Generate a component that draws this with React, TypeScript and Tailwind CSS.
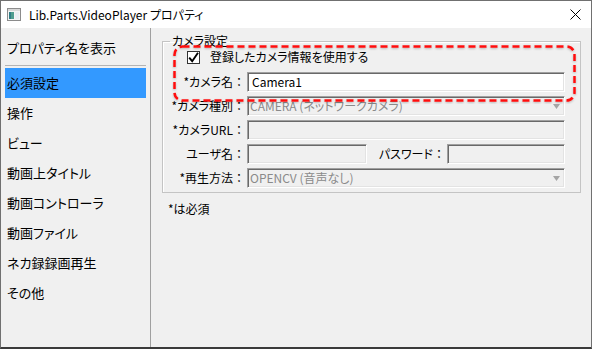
import React from "react";

const font = "font-['Noto_Sans_CJK_JP','Noto_Sans',sans-serif] [font-feature-settings:'palt']";
const sunken =
  "border border-t-[#a0a0a0] border-l-[#a0a0a0] border-b-white border-r-white shadow-[inset_1px_1px_0_#696969,inset_-1px_-1px_0_#e3e3e3]";

function Arrow() {
  return (
    <svg width="7" height="5" viewBox="0 0 7 5" className="ml-auto mr-[4px]">
      <path d="M0 0 H7 L3.5 5 Z" fill="#a5a5a5" />
    </svg>
  );
}

function Label({ children, w = "w-[82px]" }: { children: React.ReactNode; w?: string }) {
  return (
    <div className={`${w} text-right whitespace-nowrap`}>
      {children}
      <span className="[font-feature-settings:normal]">：</span>
    </div>
  );
}

export default function App() {
  const items = ["操作", "ビュー", "動画上タイトル", "動画コントローラ", "動画ファイル", "ネカ録録画再生", "その他"];
  return (
    <div className={`relative w-[592px] h-[349px] flex flex-col overflow-hidden bg-[#f0f0f0] border border-[#707070] border-b-2 border-b-[#3a3a3a] text-black ${font}`}>
      {/* title bar */}
      <div className="h-[27px] bg-white flex items-center shrink-0">
        <svg width="14" height="13" viewBox="0 0 14 13" className="ml-[6px]">
          <rect x="0.5" y="0.5" width="13" height="12" fill="#f4f4f4" stroke="#8c8c8c" />
          <rect x="1" y="1" width="12" height="2" fill="#d8d8d8" />
          <rect x="2" y="4" width="5" height="7" fill="#4f9d8f" />
          <rect x="2" y="4" width="2" height="7" fill="#2f7d86" />
          <rect x="8" y="4" width="4" height="7" fill="#e9eef2" />
        </svg>
        <div className="ml-[8px] text-[12px] leading-[16px]">Lib.Parts.VideoPlayer プロパティ</div>
        <svg width="11" height="11" viewBox="0 0 11 11" className="ml-auto mr-[10px]">
          <path d="M0.5 0.5 L10.5 10.5 M10.5 0.5 L0.5 10.5" stroke="#000" strokeWidth="1" />
        </svg>
      </div>

      {/* body */}
      <div className="flex-1 flex">
        <div className="w-[150px] shrink-0 border-r border-[#a0a0a0] pt-[5px] pl-[4px] pr-[4px] text-[13px]">
          <div className="h-[30px] flex items-center pl-[2px]">プロパティ名を表示</div>
          <div className="my-[2px] h-px bg-[#b4b4b4]" />
          <div className="h-[30px] flex items-center pl-[2px] bg-[#3399ff]">必須設定</div>
          {items.map((t) => (
            <div key={t} className="h-[30px] flex items-center pl-[2px]">
              {t}
            </div>
          ))}
        </div>

        <div className="flex-1 pl-[11px] pr-[10px] pt-[5px] text-[12px]">
          <fieldset className="border border-[#c4c4c4] shadow-[inset_1px_1px_0_#ffffff] pb-[4px]">
            <legend className="ml-[7px] px-[2px] leading-[16px]">カメラ設定</legend>
            <div className="h-[16px] flex items-center ml-[24px]">
              <div className="w-[13px] h-[13px] border border-[#333] bg-white flex items-center justify-center">
                <svg width="11" height="11" viewBox="0 0 11 11">
                  <path d="M1.2 5.6 L4.2 9.2 L10 0.8" fill="none" stroke="#000" strokeWidth="1.9" />
                </svg>
              </div>
              <div className="ml-[10px] leading-[16px]">登録したカメラ情報を使用する</div>
            </div>
            <div className="mt-[7px] flex flex-col gap-[4px]">
              <div className="h-[20px] flex items-center">
                <Label>*カメラ名</Label>
                <div className={`ml-[2px] w-[318px] h-[20px] bg-white flex items-center pl-[4px] ${sunken}`}>Camera1</div>
              </div>
              <div className="h-[20px] flex items-center">
                <Label>*カメラ種別</Label>
                <div className={`ml-[2px] w-[318px] h-[20px] flex items-center pl-[2px] text-[#8a8a8a] ${sunken}`}>
                  CAMERA (ネットワークカメラ)
                  <Arrow />
                </div>
              </div>
              <div className="h-[20px] flex items-center">
                <Label>*カメラURL</Label>
                <div className={`ml-[2px] w-[318px] h-[20px] ${sunken}`} />
              </div>
              <div className="h-[20px] flex items-center">
                <Label>ユーザ名</Label>
                <div className={`ml-[2px] w-[120px] h-[20px] ${sunken}`} />
                <Label w="w-[78px]">パスワード</Label>
                <div className={`ml-[2px] w-[118px] h-[20px] ${sunken}`} />
              </div>
              <div className="h-[20px] flex items-center">
                <Label>*再生方法</Label>
                <div className={`ml-[2px] w-[318px] h-[20px] flex items-center pl-[2px] text-[#8a8a8a] ${sunken}`}>
                  OPENCV (音声なし)
                  <Arrow />
                </div>
              </div>
            </div>
          </fieldset>
          <div className="mt-[8px] pl-[6px] leading-[16px]">*は必須</div>
        </div>
      </div>

      {/* annotation */}
      <svg
        width="406"
        height="60"
        viewBox="0 0 406 60"
        className="absolute left-[171px] top-[43px] pointer-events-none"
      >
        <defs>
          <filter id="sh" x="-5%" y="-20%" width="110%" height="140%">
            <feDropShadow dx="0" dy="1" stdDeviation="1.2" floodColor="#000" floodOpacity="0.25" />
          </filter>
        </defs>
        <rect
          x="2.5"
          y="2.5"
          width="400"
          height="54"
          rx="8"
          fill="none"
          stroke="#ff1010"
          strokeWidth="2.5"
          strokeDasharray="7 4"
          filter="url(#sh)"
        />
      </svg>
    </div>
  );
}
